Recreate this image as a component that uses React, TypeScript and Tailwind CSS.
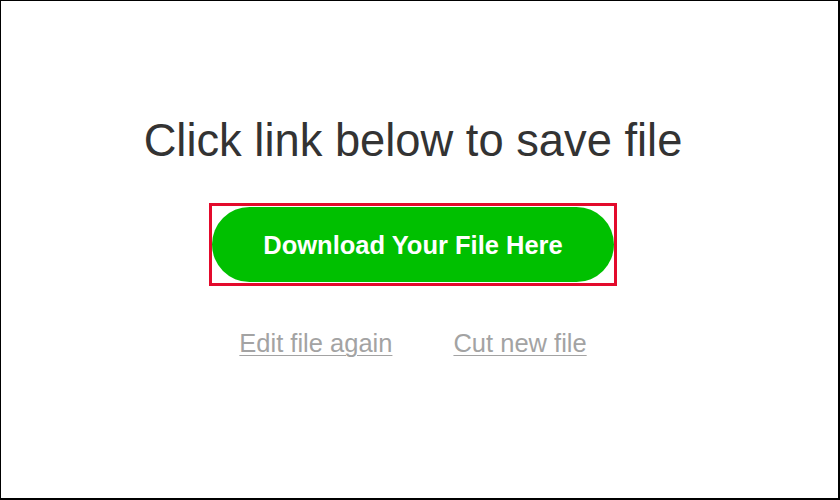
export default function App() {
  return (
    <div className="w-[840px] h-[500px] bg-white border-black border-t border-l border-r-2 border-b-2 box-border font-['Liberation_Sans',Arial,sans-serif]">
      <div className="flex flex-col items-center pr-[13px] pt-[114px]">
        <h1 className="text-[45.3px] leading-[52px] text-[#333333] font-normal">
          Click link below to save file
        </h1>
        <div className="mt-[36px] border-[3px] border-[#e30a2c] py-px">
          <a className="flex items-center justify-center w-[402px] h-[75px] pt-[3px] rounded-full bg-[#00c000] text-white font-bold text-[25.5px] leading-none">
            Download Your File Here
          </a>
        </div>
        <div className="mt-[43px] flex gap-[61px] text-[25.5px] leading-[29px] text-[#a3a3a3]">
          <a className="underline decoration-1 underline-offset-[3px]">Edit file again</a>
          <a className="underline decoration-1 underline-offset-[3px]">Cut new file</a>
        </div>
      </div>
    </div>
  );
}
